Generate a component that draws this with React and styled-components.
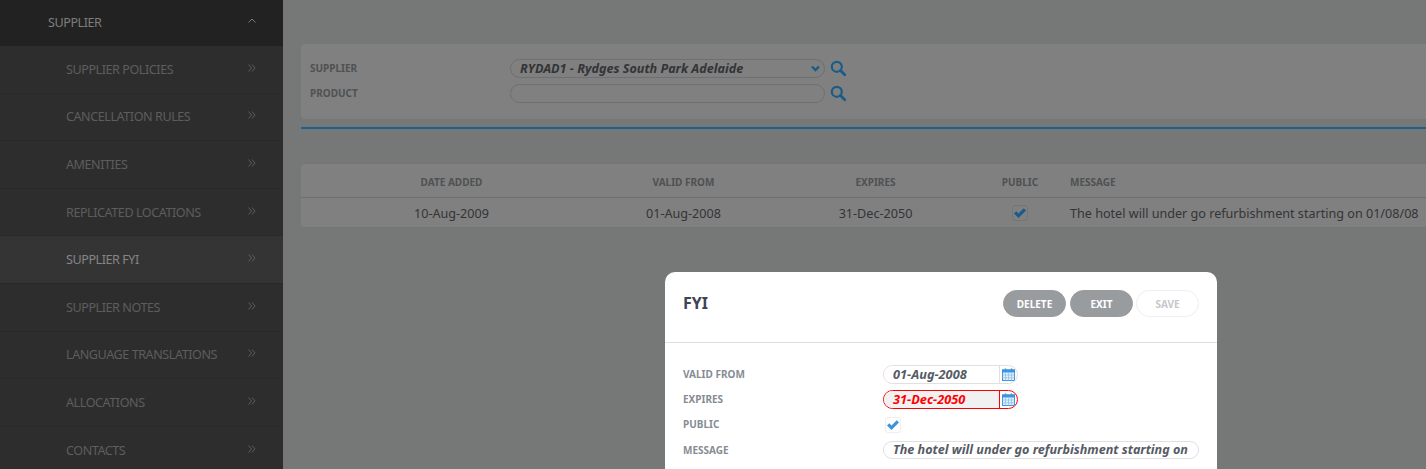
import React from "react";
import styled, { createGlobalStyle } from "styled-components";

const Global = createGlobalStyle`
  html, body { margin: 0; padding: 0; height: 100%; overflow: hidden; background: #767877; }
  #root { height: 100%; }
  * { box-sizing: border-box; }
  body { font-family: "Noto Sans", "Open Sans", sans-serif; }
`;

const Page = styled.div`
  position: relative;
  display: flex;
  width: 1426px;
  height: 469px;
  overflow: hidden;
  background: #767877;
`;

const Sidebar = styled.nav`
  flex: 0 0 283px;
  background: #2d2d2d;
  height: 469px;
  overflow: hidden;
`;

const SideHead = styled.div`
  height: 46px;
  background: #222222;
  display: flex;
  align-items: center;
  justify-content: space-between;
  padding: 0 27px 1px 48px;
  font-size: 12.6px;
  letter-spacing: -0.45px;
  color: #7e7e7e;
`;

const SideRow = styled.div`
  height: 47.6px;
  display: flex;
  align-items: center;
  justify-content: space-between;
  padding: 0 27px 0 66px;
  font-size: 12.6px;
  letter-spacing: -0.45px;
  color: ${(p) => (p.$active ? "#858585" : "#5d5d5d")};
  background: ${(p) => (p.$active ? "#343434" : "#2d2d2d")};
  border-bottom: 1px solid #292929;
`;

const Chev = styled.svg`
  width: 8px;
  height: 8px;
  margin-top: -3px;
  fill: none;
  stroke: ${(p) => p.$color || "#5d5d5d"};
  stroke-width: 1;
`;

const Main = styled.main`
  flex: 1;
  min-width: 0;
  padding: 44px 0 0 18px;
`;

const FilterPanel = styled.section`
  height: 75px;
  background: #808080;
  border-radius: 4px 0 0 4px;
  padding: 13px 9px 0;
  display: grid;
  grid-template-columns: 200px 1fr;
  grid-auto-rows: 25px;
  align-items: center;
`;

const FilterLabel = styled.label`
  font-size: 10px;
  font-weight: 700;
  color: #4f5152;
  padding-bottom: 3px;
`;

const FilterField = styled.div`
  display: flex;
  align-items: center;
  gap: 5px;
  padding-bottom: 3px;
`;

const FilterInput = styled.div`
  width: 315px;
  height: 19px;
  border: 1px solid #6e7070;
  border-radius: 10px;
  background: #808080;
  display: flex;
  align-items: center;
  justify-content: space-between;
  padding: 0 4px 0 9px;
  font-size: 12.6px;
  font-weight: 700;
  font-style: italic;
  color: #333437;
`;

const BlueRule = styled.div`
  height: 2px;
  background: #1d5f8f;
  margin-top: 8px;
`;

const Table = styled.section`
  margin-top: 34px;
  background: #808080;
  border-radius: 4px 0 0 4px;
  border-top: 1px solid #747675;
  border-bottom: 1px solid #747675;
`;

const TableRow = styled.div`
  display: grid;
  grid-template-columns: 301px 163px 221px 68px 1fr;
  align-items: center;
  height: ${(p) => p.$h}px;
  padding-top: ${(p) => p.$top}px;
  border-bottom: ${(p) => (p.$line ? "1px solid #6e7070" : "none")};
`;

const Th = styled.div`
  font-size: 10px;
  font-weight: 700;
  color: #4f5152;
  text-align: ${(p) => p.$align || "center"};
  padding-left: ${(p) => p.$pad || 0}px;
`;

const Td = styled.div`
  font-size: 12.6px;
  color: #333437;
  text-align: ${(p) => p.$align || "center"};
  padding-left: ${(p) => p.$pad || 0}px;
  display: ${(p) => (p.$flex ? "flex" : "block")};
  justify-content: center;
  white-space: nowrap;
`;

const CheckBox = styled.div`
  width: 16px;
  height: 16px;
  margin-left: ${(p) => p.$ml || 0}px;
  margin-bottom: ${(p) => p.$mb || 0}px;
  border: 1px solid ${(p) => p.$border};
  border-radius: 3px;
  background: ${(p) => p.$bg};
  display: flex;
  align-items: center;
  justify-content: center;
`;

const Modal = styled.div`
  position: absolute;
  left: 665px;
  top: 272px;
  width: 552px;
  height: 220px;
  background: #ffffff;
  border-radius: 10px;
`;

const ModalHead = styled.header`
  height: 71px;
  padding: 18px 18px 0;
  display: flex;
  justify-content: space-between;
  align-items: flex-start;
  border-bottom: 1px solid #dddde8;
`;

const ModalTitle = styled.h2`
  margin: 0;
  font-size: 16px;
  line-height: 26px;
  font-weight: 700;
  color: #3e4452;
`;

const Buttons = styled.div`
  display: flex;
  gap: 4px;
`;

const Btn = styled.button`
  width: 63px;
  height: 27px;
  margin-left: ${(p) => (p.$disabled ? "-1px" : "0")};
  border-radius: 14px;
  font: 700 10px "Noto Sans", sans-serif;
  padding: 0;
  border: 1px solid ${(p) => (p.$disabled ? "#eceef0" : "#999c9f")};
  background: ${(p) => (p.$disabled ? "#ffffff" : "#999c9f")};
  color: ${(p) => (p.$disabled ? "#c5c8cc" : "#ffffff")};
`;

const ModalBody = styled.div`
  padding: 20px 18px 0;
  display: grid;
  grid-template-columns: 200px 1fr;
  grid-template-rows: 25px 25px 25px 27px;
  align-items: center;
`;

const ModalLabel = styled.label`
  font-size: 10px;
  font-weight: 700;
  color: #878c94;
  padding-bottom: 3px;
`;

const DateGroup = styled.div`
  display: flex;
  width: 135px;
  height: 19px;
  margin-bottom: 3px;
  border: 1px solid ${(p) => (p.$error ? "#ff0000" : "#e0e0e0")};
  border-radius: 10px;
  overflow: hidden;
  background: #fff;
`;

const DateValue = styled.div`
  width: 116px;
  padding-left: 9px;
  font-size: 12.75px;
  line-height: 17px;
  font-weight: 700;
  font-style: italic;
  color: ${(p) => (p.$error ? "#ff0000" : "#565b64")};
  background: ${(p) => (p.$error ? "#f1f1f1" : "#fff")};
  border-right: 1px solid ${(p) => (p.$error ? "#ff0000" : "#e0e0e0")};
`;

const DateIcon = styled.div`
  flex: 1;
  display: flex;
  align-items: center;
  justify-content: center;
`;

const MessageInput = styled.div`
  width: 316px;
  height: 18px;
  margin-bottom: 3px;
  border: 1px solid #e0e0e0;
  border-radius: 10px;
  padding-left: 9px;
  font-size: 12.6px;
  line-height: 15px;
  font-weight: 700;
  font-style: italic;
  color: #565b64;
  white-space: nowrap;
`;

const ChevRight = () => (
  <Chev viewBox="0 0 8 8">
    <path d="M.5 .5l3 3.500-3 3.500M4 .5l3 3.500-3 3.500" />
  </Chev>
);

const ChevUp = () => (
  <Chev viewBox="0 0 8 8" $color="#7e7e7e">
    <path d="M.5 5.500L4 2l3.500 3.500" />
  </Chev>
);

const Search = () => (
  <svg width="16" height="16" viewBox="0 0 16 16" fill="none" stroke="#1a5c88" strokeWidth="2.200">
    <circle cx="6.800" cy="6.800" r="5" />
    <path d="M10.500 10.500L15 15" strokeWidth="2.800" strokeLinecap="round" />
  </svg>
);

const Caret = () => (
  <svg width="9" height="7" viewBox="0 0 9 7" fill="none" stroke="#1a5c88" strokeWidth="2.400">
    <path d="M1 1.500l3.500 3.500L8 1.500" />
  </svg>
);

const Tick = ({ color }) => (
  <svg width="12" height="10" viewBox="0 0 12 10" fill={color}>
    <path d="M0 5.500L2.300 3.200l2.200 2.200L9.700 .2 12 2.500 4.500 10z" />
  </svg>
);

const Calendar = () => (
  <svg width="13" height="13" viewBox="0 0 13 13" fill="none">
    <rect x="0.500" y="2" width="12" height="10.500" fill="#e3f0fb" stroke="#3d94dc" />
    <rect x="0.500" y="2" width="12" height="2" fill="#3d94dc" stroke="#3d94dc" />
    <path d="M3.500 0.500v2.500M9.500 0.500v2.500" stroke="#3d94dc" strokeWidth="1.500" />
    <path d="M0.500 7h12M0.500 9.800h12M3.500 4.500v8M6.500 4.500v8M9.500 4.500v8" stroke="#8dc1ec" strokeWidth="0.800" />
  </svg>
);

const items = [
  "SUPPLIER POLICIES",
  "CANCELLATION RULES",
  "AMENITIES",
  "REPLICATED LOCATIONS",
  "SUPPLIER FYI",
  "SUPPLIER NOTES",
  "LANGUAGE TRANSLATIONS",
  "ALLOCATIONS",
  "CONTACTS",
];

export default function App() {
  return (
    <Page>
      <Global />
      <Sidebar>
        <SideHead>
          SUPPLIER
          <ChevUp />
        </SideHead>
        {items.map((t) => (
          <SideRow key={t} $active={t === "SUPPLIER FYI"}>
            {t}
            <ChevRight />
          </SideRow>
        ))}
      </Sidebar>
      <Main>
        <FilterPanel>
          <FilterLabel>SUPPLIER</FilterLabel>
          <FilterField>
            <FilterInput>
              RYDAD1 - Rydges South Park Adelaide
              <Caret />
            </FilterInput>
            <Search />
          </FilterField>
          <FilterLabel>PRODUCT</FilterLabel>
          <FilterField>
            <FilterInput />
            <Search />
          </FilterField>
        </FilterPanel>
        <BlueRule />
        <Table>
          <TableRow $h={34} $top={3} $line>
            <Th>DATE ADDED</Th>
            <Th>VALID FROM</Th>
            <Th>EXPIRES</Th>
            <Th>PUBLIC</Th>
            <Th $align="left" $pad={16}>MESSAGE</Th>
          </TableRow>
          <TableRow $h={29} $top={1}>
            <Td>10-Aug-2009</Td>
            <Td>01-Aug-2008</Td>
            <Td>31-Dec-2050</Td>
            <Td $flex>
              <CheckBox $border="#747675" $bg="#808080">
                <Tick color="#1a5c88" />
              </CheckBox>
            </Td>
            <Td $align="left" $pad={16}>The hotel will under go refurbishment starting on 01/08/08</Td>
          </TableRow>
        </Table>
      </Main>
      <Modal>
        <ModalHead>
          <ModalTitle>FYI</ModalTitle>
          <Buttons>
            <Btn>DELETE</Btn>
            <Btn>EXIT</Btn>
            <Btn $disabled>SAVE</Btn>
          </Buttons>
        </ModalHead>
        <ModalBody>
          <ModalLabel>VALID FROM</ModalLabel>
          <DateGroup>
            <DateValue>01-Aug-2008</DateValue>
            <DateIcon><Calendar /></DateIcon>
          </DateGroup>
          <ModalLabel>EXPIRES</ModalLabel>
          <DateGroup $error>
            <DateValue $error>31-Dec-2050</DateValue>
            <DateIcon><Calendar /></DateIcon>
          </DateGroup>
          <ModalLabel>PUBLIC</ModalLabel>
          <CheckBox $border="#eeeeee" $bg="#fff" $ml={2} $mb={2}>
            <Tick color="#3d94dc" />
          </CheckBox>
          <ModalLabel>MESSAGE</ModalLabel>
          <MessageInput>The hotel will under go refurbishment starting on</MessageInput>
        </ModalBody>
      </Modal>
    </Page>
  );
}
